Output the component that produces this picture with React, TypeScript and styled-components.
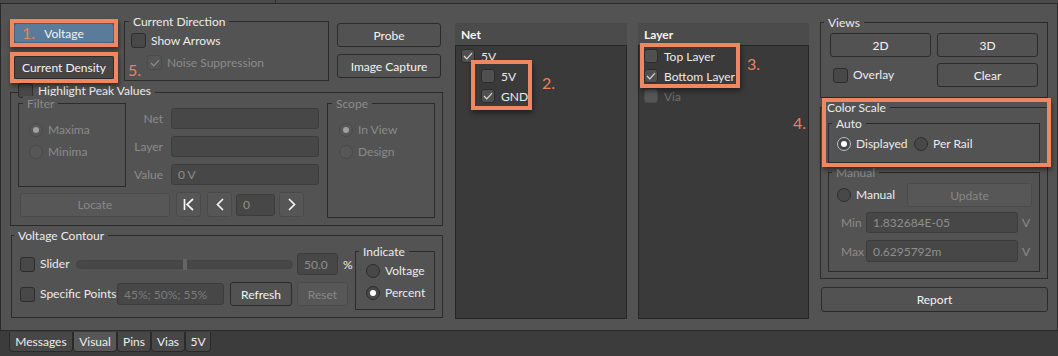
import React from "react";
import styled, { createGlobalStyle, css } from "styled-components";

const ORANGE = "#ef8762";
const FONT = `Lato, "Noto Sans", "DejaVu Sans", sans-serif`;
const PANEL = "#535353";
const TEXT = "#ebebeb";
const DIM = "#8b8b8b";

const GlobalStyle = createGlobalStyle`
  html, body { margin: 0; padding: 0; background: #3c3c3c; }
  body { font-family: ${FONT}; font-size: 12px; color: ${TEXT}; }
  *, *::before, *::after { box-sizing: border-box; }
`;

const Screen = styled.div`
  position: relative;
  width: 1058px;
  height: 356px;
  display: flex;
  flex-direction: column;
  background: #3c3c3c;
  overflow: hidden;
`;

const TopStrip = styled.div`
  height: 3px;
  flex: none;
  display: flex;
  background: #4a4a4a;
`;

const StripDivider = styled.span`
  margin-left: 275px;
  width: 1px;
  background: #2f2f2f;
`;

const Main = styled.div`
  height: 328px;
  flex: none;
  display: flex;
  align-items: flex-start;
  border: 1px solid #2a2a2a;
  background: ${PANEL};
`;

/* ---------- generic controls ---------- */

type BtnVariant = "normal" | "primary" | "dark" | "disabled" | "nav";

const Button = styled.button<{ $w?: number; $h: number; $variant?: BtnVariant; $ml?: number }>`
  flex: none;
  width: ${(p) => (p.$w ? `${p.$w}px` : "100%")};
  height: ${(p) => p.$h}px;
  margin-left: ${(p) => p.$ml ?? 0}px;
  padding: 0;
  display: flex;
  align-items: center;
  justify-content: center;
  border: 1px solid #2b2b2b;
  border-radius: 3px;
  background: #525252;
  color: #f3f3f3;
  font-family: ${FONT};
  font-size: 12px;
  cursor: default;
  ${(p) =>
    p.$variant === "primary" &&
    css`
      background: #5a7b9a;
      border-color: #47637e;
    `}
  ${(p) =>
    p.$variant === "dark" &&
    css`
      background: #464646;
      border-color: #2b2b2b;
    `}
  ${(p) =>
    p.$variant === "disabled" &&
    css`
      background: #575757;
      border-color: #4b4b4b;
      color: #878787;
    `}
  ${(p) =>
    p.$variant === "nav" &&
    css`
      background: #565656;
      border-color: #4a4a4a;
    `}
`;

const Group = styled.div<{ $w: number; $h: number; $mt?: number; $ml?: number }>`
  position: relative;
  flex: none;
  width: ${(p) => p.$w}px;
  height: ${(p) => p.$h}px;
  margin-top: ${(p) => p.$mt ?? 0}px;
  margin-left: ${(p) => p.$ml ?? 0}px;
  border: 1px solid #2b2b2b;
`;

const Legend = styled.div<{ $left: number; $top?: number; $dim?: boolean; $pl?: number }>`
  position: absolute;
  top: ${(p) => p.$top ?? -8}px;
  left: ${(p) => p.$left}px;
  padding: 0 4px 0 ${(p) => p.$pl ?? 4}px;
  display: flex;
  align-items: center;
  gap: 5px;
  line-height: 15px;
  background: ${PANEL};
  color: ${(p) => (p.$dim ? DIM : TEXT)};
  white-space: nowrap;
`;

const Inner = styled.div<{ $pt: number; $pl: number; $gap?: number; $row?: boolean }>`
  display: flex;
  flex-direction: ${(p) => (p.$row ? "row" : "column")};
  align-items: flex-start;
  padding: ${(p) => p.$pt}px 0 0 ${(p) => p.$pl}px;
  gap: ${(p) => p.$gap ?? 0}px;
`;

const Box = styled.span<{ $dim?: boolean; $size?: number; $list?: boolean }>`
  flex: none;
  width: ${(p) => p.$size ?? 15}px;
  height: ${(p) => p.$size ?? 15}px;
  display: flex;
  align-items: center;
  justify-content: center;
  border: 1px solid ${(p) => (p.$dim ? "#4a4a4a" : "#2c2c2c")};
  border-radius: 3px;
  background: ${(p) => (p.$dim ? "#565656" : p.$list ? "#505050" : "#484848")};
`;

const CheckMark = ({ color }: { color: string }) => (
  <svg width="10" height="8" viewBox="0 0 10 8">
    <polyline points="1,4 3.8,6.8 9,1.2" fill="none" stroke={color} strokeWidth="1.2" />
  </svg>
);

function Checkbox({ checked, dim, size, list }: { checked?: boolean; dim?: boolean; size?: number; list?: boolean }) {
  return (
    <Box $dim={dim} $size={size} $list={list}>
      {checked && <CheckMark color={dim ? "#8d8d8d" : "#dadada"} />}
    </Box>
  );
}

const RadioCircle = styled.span<{ $checked?: boolean; $dim?: boolean; $focus?: boolean }>`
  flex: none;
  width: 14px;
  height: 14px;
  border-radius: 50%;
  display: flex;
  align-items: center;
  justify-content: center;
  border: 1px solid ${(p) => (p.$focus ? "#b8c2ce" : p.$dim ? "#4a4a4a" : "#2c2c2c")};
  background: ${(p) => (p.$dim ? "#575757" : "#484848")};
  &::after {
    content: "";
    width: 6px;
    height: 6px;
    border-radius: 50%;
    background: ${(p) => (p.$dim ? "#a0a0a0" : "#ffffff")};
    display: ${(p) => (p.$checked ? "block" : "none")};
  }
`;

const Option = styled.div<{ $dim?: boolean; $w?: number; $ml?: number; $gap?: number }>`
  flex: none;
  display: flex;
  align-items: center;
  gap: ${(p) => p.$gap ?? 5}px;
  width: ${(p) => (p.$w ? `${p.$w}px` : "auto")};
  margin-left: ${(p) => p.$ml ?? 0}px;
  line-height: 14px;
  color: ${(p) => (p.$dim ? DIM : TEXT)};
  white-space: nowrap;
`;

const Field = styled.input<{ $w: number; $h: number; $ml?: number }>`
  flex: none;
  width: ${(p) => p.$w}px;
  height: ${(p) => p.$h}px;
  margin-left: ${(p) => p.$ml ?? 0}px;
  padding: 0 0 0 6px;
  border: 1px solid #3c3c3c;
  border-radius: 3px;
  background: #474747;
  color: #8e8e8e;
  font-family: ${FONT};
  font-size: 12px;
  outline: none;
  &::placeholder {
    color: #7c7c7c;
  }
`;

const Row = styled.div<{ $h: number; $mt?: number; $ml?: number }>`
  display: flex;
  align-items: center;
  height: ${(p) => p.$h}px;
  margin-top: ${(p) => p.$mt ?? 0}px;
  margin-left: ${(p) => p.$ml ?? 0}px;
`;

const Stack = styled.div<{ $w: number; $gap: number; $mt?: number; $ml?: number }>`
  flex: none;
  display: flex;
  flex-direction: column;
  width: ${(p) => p.$w}px;
  gap: ${(p) => p.$gap}px;
  margin-top: ${(p) => p.$mt ?? 0}px;
  margin-left: ${(p) => p.$ml ?? 0}px;
`;

const Unit = styled.span<{ $ml?: number; $dim?: boolean; $w?: number }>`
  flex: none;
  width: ${(p) => (p.$w ? `${p.$w}px` : "auto")};
  margin-left: ${(p) => p.$ml ?? 0}px;
  color: ${(p) => (p.$dim ? DIM : TEXT)};
`;

/* ---------- left section ---------- */

const LeftSection = styled.div`
  flex: none;
  width: 442px;
  padding-left: 9px;
  display: flex;
  flex-direction: column;
  align-items: flex-start;
`;

const TopRow = styled.div`
  display: flex;
  align-items: flex-start;
  margin-top: 17px;
  padding-left: 4px;
`;

const HBody = styled.div`
  display: flex;
  align-items: flex-start;
  padding: 10px 0 0 7px;
`;

const LeftPart = styled.div`
  width: 301px;
  display: flex;
  flex-direction: column;
`;

const PartRow = styled.div`
  display: flex;
  align-items: flex-start;
`;

const Fields = styled.div`
  display: flex;
  flex-direction: column;
  gap: 7px;
  margin-top: 5px;
`;

const FieldLabel = styled.span`
  width: 45px;
  padding-right: 8px;
  text-align: right;
  color: ${DIM};
`;

const VCBody = styled.div`
  display: flex;
  align-items: flex-start;
  padding: 15px 0 0 8px;
`;

const VCRows = styled.div`
  width: 328px;
  margin-top: 2px;
  display: flex;
  flex-direction: column;
`;

const SliderTrack = styled.div`
  flex: none;
  width: 217px;
  height: 9px;
  display: flex;
  align-items: center;
  padding-left: 106px;
  border-radius: 5px;
  background: #474747;
  border: 1px solid #444;
`;

const SliderThumb = styled.span`
  width: 4px;
  height: 11px;
  border-radius: 1px;
  background: #646464;
`;

/* ---------- lists ---------- */

const ListPanel = styled.div<{ $w: number; $ml: number }>`
  flex: none;
  width: ${(p) => p.$w}px;
  height: 296px;
  margin-top: 19px;
  margin-left: ${(p) => p.$ml}px;
  display: flex;
  flex-direction: column;
`;

const ListHeader = styled.div`
  flex: none;
  height: 22px;
  display: flex;
  align-items: center;
  padding-left: 6px;
  background: #4b4b4b;
  color: #f4f4f4;
  font-weight: 700;
`;

const ListBody = styled.div`
  flex: 1;
  padding-left: 5px;
  background: #3a3a3a;
  border: 1px solid #262626;
`;

const ListItem = styled.div<{ $indent?: number; $dim?: boolean }>`
  height: 20px;
  display: flex;
  align-items: center;
  gap: 6px;
  padding-left: ${(p) => p.$indent ?? 0}px;
  color: ${(p) => (p.$dim ? "#6e6e6e" : TEXT)};
`;

/* ---------- right column ---------- */

const RightCol = styled.div`
  flex: none;
  width: 228px;
  margin: 18px 0 0 11px;
  display: flex;
  flex-direction: column;
  align-items: flex-start;
`;

const ViewGrid = styled.div`
  display: grid;
  grid-template-columns: 101px 101px;
  grid-auto-rows: 24px;
  column-gap: 6px;
  row-gap: 6px;
  align-items: center;
  padding: 10px 0 0 9px;
`;

const ScaleBody = styled.div`
  display: flex;
  flex-direction: column;
  padding: 15px 0 0 7px;
`;

/* ---------- bottom tabs ---------- */

const TabBar = styled.div`
  display: flex;
  padding: 1px 0 0 9px;
`;

const Tab = styled.div<{ $w: number; $active?: boolean }>`
  flex: none;
  width: ${(p) => p.$w}px;
  height: 20px;
  display: flex;
  align-items: center;
  justify-content: center;
  border: 1px solid #2a2a2a;
  border-top: none;
  border-radius: 0 0 4px 4px;
  background: ${(p) => (p.$active ? "#575757" : "#474747")};
  color: #eeeeee;
`;

/* ---------- annotations (overlay) ---------- */

const Mark = styled.div<{ $x: number; $y: number; $w: number; $h: number }>`
  position: absolute;
  left: ${(p) => p.$x}px;
  top: ${(p) => p.$y}px;
  width: ${(p) => p.$w}px;
  height: ${(p) => p.$h}px;
  border: 4px solid ${ORANGE};
  box-shadow: 1px 3px 5px rgba(0, 0, 0, 0.45);
  pointer-events: none;
`;

const MarkNum = styled.span<{ $x: number; $y: number }>`
  position: absolute;
  left: ${(p) => p.$x}px;
  top: ${(p) => p.$y}px;
  font-size: 16px;
  line-height: 16px;
  color: #e8835d;
  pointer-events: none;
`;

/* ---------- icons ---------- */

const FirstIcon = () => (
  <svg width="12" height="13" viewBox="0 0 12 13">
    <path d="M1.5 1v11M10 1L4 6.5L10 12" fill="none" stroke="#f4f4f4" strokeWidth="1.7" />
  </svg>
);
const PrevIcon = () => (
  <svg width="8" height="13" viewBox="0 0 8 13">
    <path d="M7 1L1.5 6.5L7 12" fill="none" stroke="#f4f4f4" strokeWidth="1.7" />
  </svg>
);
const NextIcon = () => (
  <svg width="8" height="13" viewBox="0 0 8 13">
    <path d="M1 1L6.5 6.5L1 12" fill="none" stroke="#f4f4f4" strokeWidth="1.7" />
  </svg>
);

export default function App() {
  return (
    <>
      <GlobalStyle />
      <Screen>
        <TopStrip>
          <StripDivider />
        </TopStrip>
        <Main>
          <LeftSection>
            <TopRow>
              <Stack $w={100} $gap={13} $mt={2}>
                <Button $h={20} $variant="primary">Voltage</Button>
                <Button $h={23} $variant="dark">Current Density</Button>
              </Stack>
              <Group $w={205} $h={60} $ml={10}>
                <Legend $left={4}>Current Direction</Legend>
                <Inner $pt={11} $pl={6} $gap={7}>
                  <Option>
                    <Checkbox />
                    Show Arrows
                  </Option>
                  <Option $dim $ml={16}>
                    <Checkbox checked dim />
                    Noise Suppression
                  </Option>
                </Inner>
              </Group>
              <Stack $w={104} $gap={7} $mt={2} $ml={8}>
                <Button $h={24}>Probe</Button>
                <Button $h={24}>Image Capture</Button>
              </Stack>
            </TopRow>

            <Group $w={433} $h={134} $mt={11}>
              <Legend $left={7} $top={-10} $pl={0}>
                <Checkbox />
                Highlight Peak Values
              </Legend>
              <HBody>
                <LeftPart>
                  <PartRow>
                    <Group $w={108} $h={84}>
                      <Legend $left={4} $dim>Filter</Legend>
                      <Inner $pt={19} $pl={10} $gap={8}>
                        <Option $dim>
                          <RadioCircle $checked $dim />
                          Maxima
                        </Option>
                        <Option $dim>
                          <RadioCircle $dim />
                          Minima
                        </Option>
                      </Inner>
                    </Group>
                    <Fields>
                      <Row $h={21}>
                        <FieldLabel>Net</FieldLabel>
                        <Field $w={148} $h={21} readOnly />
                      </Row>
                      <Row $h={21}>
                        <FieldLabel>Layer</FieldLabel>
                        <Field $w={148} $h={21} readOnly />
                      </Row>
                      <Row $h={21}>
                        <FieldLabel>Value</FieldLabel>
                        <Field $w={148} $h={21} readOnly defaultValue="0 V" />
                      </Row>
                    </Fields>
                  </PartRow>
                  <Row $h={25} $mt={5}>
                    <Button $w={150} $h={24} $ml={2} $variant="disabled">Locate</Button>
                    <Button $w={25} $h={25} $ml={6} $variant="nav" aria-label="First">
                      <FirstIcon />
                    </Button>
                    <Button $w={25} $h={25} $ml={6} $variant="nav" aria-label="Previous">
                      <PrevIcon />
                    </Button>
                    <Field $w={39} $h={22} $ml={4} readOnly defaultValue="0" />
                    <Button $w={25} $h={25} $ml={4} $variant="nav" aria-label="Next">
                      <NextIcon />
                    </Button>
                  </Row>
                </LeftPart>
                <Group $w={108} $h={115} $ml={8}>
                  <Legend $left={4} $dim>Scope</Legend>
                  <Inner $pt={19} $pl={11} $gap={8}>
                    <Option $dim>
                      <RadioCircle $checked $dim />
                      In View
                    </Option>
                    <Option $dim>
                      <RadioCircle $dim />
                      Design
                    </Option>
                  </Inner>
                </Group>
              </HBody>
            </Group>

            <Group $w={432} $h={83} $mt={9} $ml={1}>
              <Legend $left={2}>Voltage Contour</Legend>
              <VCBody>
                <VCRows>
                  <Row $h={22}>
                    <Option $w={56}>
                      <Checkbox />
                      Slider
                    </Option>
                    <SliderTrack>
                      <SliderThumb />
                    </SliderTrack>
                    <Field $w={41} $h={22} $ml={4} readOnly defaultValue="50.0" />
                    <Unit $ml={5}>%</Unit>
                  </Row>
                  <Row $h={24} $mt={7}>
                    <Option $w={97}>
                      <Checkbox />
                      Specific Points
                    </Option>
                    <Field $w={107} $h={22} readOnly placeholder="45%; 50%; 55%" />
                    <Button $w={62} $h={24} $ml={6}>Refresh</Button>
                    <Button $w={51} $h={24} $ml={5} $variant="disabled">Reset</Button>
                  </Row>
                </VCRows>
                <Group $w={80} $h={59} $ml={7}>
                  <Legend $left={3}>Indicate</Legend>
                  <Inner $pt={12} $pl={10} $gap={8}>
                    <Option>
                      <RadioCircle />
                      Voltage
                    </Option>
                    <Option>
                      <RadioCircle $checked />
                      Percent
                    </Option>
                  </Inner>
                </Group>
              </VCBody>
            </Group>
          </LeftSection>

          <ListPanel $w={172} $ml={12}>
            <ListHeader>Net</ListHeader>
            <ListBody>
              <ListItem>
                <Checkbox size={14} list checked />
                5V
              </ListItem>
              <ListItem $indent={20}>
                <Checkbox size={14} list />
                5V
              </ListItem>
              <ListItem $indent={20}>
                <Checkbox size={14} list checked />
                GND
              </ListItem>
            </ListBody>
          </ListPanel>

          <ListPanel $w={171} $ml={11}>
            <ListHeader>Layer</ListHeader>
            <ListBody>
              <ListItem>
                <Checkbox size={14} list />
                Top Layer
              </ListItem>
              <ListItem>
                <Checkbox size={14} list checked />
                Bottom Layer
              </ListItem>
              <ListItem $dim>
                <Checkbox size={14} list dim />
                Via
              </ListItem>
            </ListBody>
          </ListPanel>

          <RightCol>
            <Group $w={228} $h={76}>
              <Legend $left={3}>Views</Legend>
              <ViewGrid>
                <Button $h={24}>2D</Button>
                <Button $h={24}>3D</Button>
                <Option $ml={3}>
                  <Checkbox />
                  Overlay
                </Option>
                <Button $h={24}>Clear</Button>
              </ViewGrid>
            </Group>

            <Group $w={228} $h={172} $mt={9}>
              <Legend $left={2}>Color Scale</Legend>
              <ScaleBody>
                <Group $w={212} $h={40}>
                  <Legend $left={3}>Auto</Legend>
                  <Inner $pt={13} $pl={8} $row>
                    <Option $w={77}>
                      <RadioCircle $checked $focus />
                      Displayed
                    </Option>
                    <Option>
                      <RadioCircle />
                      Per Rail
                    </Option>
                  </Inner>
                </Group>
                <Group $w={212} $h={100} $mt={9}>
                  <Legend $left={3} $dim>Manual</Legend>
                  <Row $h={24} $mt={10} $ml={8}>
                    <Option $w={70}>
                      <RadioCircle />
                      Manual
                    </Option>
                    <Button $w={125} $h={24} $variant="disabled">Update</Button>
                  </Row>
                  <Row $h={21} $mt={5} $ml={12}>
                    <Unit $dim $w={25}>Min</Unit>
                    <Field $w={152} $h={21} readOnly defaultValue="1.832684E-05" />
                    <Unit $dim $ml={4}>V</Unit>
                  </Row>
                  <Row $h={22} $mt={7} $ml={12}>
                    <Unit $dim $w={25}>Max</Unit>
                    <Field $w={152} $h={22} readOnly defaultValue="0.6295792m" />
                    <Unit $dim $ml={4}>V</Unit>
                  </Row>
                </Group>
              </ScaleBody>
            </Group>

            <Stack $w={227} $gap={0} $mt={8} $ml={1}>
              <Button $h={25}>Report</Button>
            </Stack>
          </RightCol>
        </Main>

        <TabBar>
          <Tab $w={64}>Messages</Tab>
          <Tab $w={44} $active>Visual</Tab>
          <Tab $w={34}>Pins</Tab>
          <Tab $w={34}>Vias</Tab>
          <Tab $w={26}>5V</Tab>
        </TabBar>

        <Mark $x={10} $y={19} $w={108} $h={28} />
        <MarkNum $x={22} $y={25}>1.</MarkNum>
        <Mark $x={10} $y={52} $w={108} $h={31} />
        <MarkNum $x={128} $y={62}>5.</MarkNum>
        <Mark $x={471} $y={60} $w={61} $h={50} />
        <MarkNum $x={542} $y={75}>2.</MarkNum>
        <Mark $x={640} $y={43} $w={100} $h={45} />
        <MarkNum $x={747} $y={56}>3.</MarkNum>
        <Mark $x={822} $y={98} $w={229} $h={69} />
        <MarkNum $x={793} $y={115}>4.</MarkNum>
      </Screen>
    </>
  );
}
